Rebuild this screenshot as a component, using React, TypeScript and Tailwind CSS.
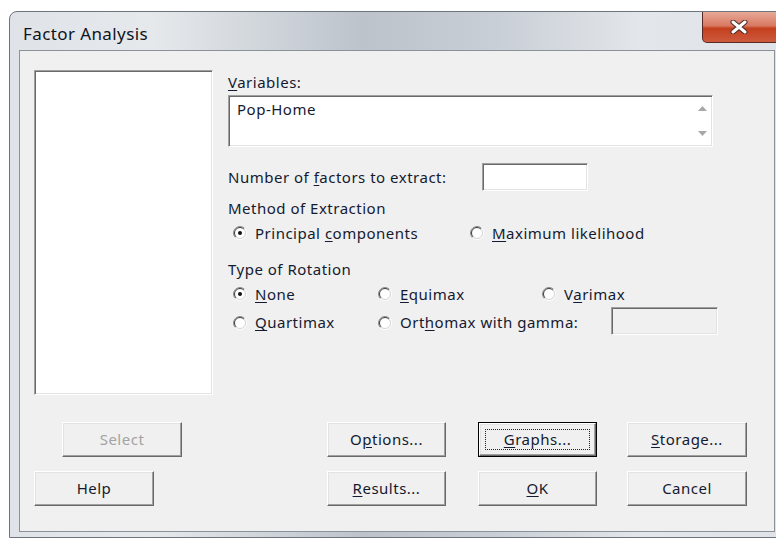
import React from 'react';

const ui = "font-['Segoe_UI','Noto_Sans',Tahoma,sans-serif]";

const sunken =
  'border border-t-[#a0a0a0] border-l-[#a0a0a0] border-r-white border-b-white shadow-[inset_1px_1px_0_#696969,inset_-1px_-1px_0_#e3e3e3]';

const raised =
  'border border-t-white border-l-white border-r-[#696969] border-b-[#696969] shadow-[inset_-1px_-1px_0_#a0a0a0,inset_1px_1px_0_#e3e3e3]';

// label with one underlined access-key letter
const Key: React.FC<{ text: string; at: number }> = ({ text, at }) => (
  <>
    {text.slice(0, at)}
    <span className="underline underline-offset-2">{text[at]}</span>
    {text.slice(at + 1)}
  </>
);

const RadioDot: React.FC<{ on?: boolean }> = ({ on }) => (
  <svg width="14" height="14" viewBox="0 0 14 14" className="shrink-0">
    <circle cx="7" cy="7" r="5.5" fill="#fff" />
    <path d="M11.6 2.4 A6.5 6.5 0 0 0 2.4 11.6" fill="none" stroke="#8a8a8a" strokeWidth="1" />
    <path d="M10.9 3.1 A5.5 5.5 0 0 0 3.1 10.9" fill="none" stroke="#3c3c3c" strokeWidth="1" />
    <path d="M2.4 11.6 A6.5 6.5 0 0 0 11.6 2.4" fill="none" stroke="#fff" strokeWidth="1" />
    <path d="M3.1 10.9 A5.5 5.5 0 0 0 10.9 3.1" fill="none" stroke="#d4d4d4" strokeWidth="1" />
    {on && <circle cx="7" cy="7" r="2" fill="#111" />}
  </svg>
);

const Radio: React.FC<{ on?: boolean; children: React.ReactNode }> = ({ on, children }) => (
  <div className="flex items-center gap-[8px] h-[18px]">
    <RadioDot on={on} />
    <span>{children}</span>
  </div>
);

const Btn: React.FC<{
  children: React.ReactNode;
  w?: string;
  disabled?: boolean;
  focus?: boolean;
}> = ({ children, w = 'w-[119px]', disabled, focus }) => (
  <div className={`${w} h-[35px] ${focus ? 'border border-black' : ''}`}>
    <div className={`${raised} h-full bg-[#f0f0f0] flex items-center justify-center ${disabled ? 'text-[#a3a3a3]' : ''}`}>
      {focus ? (
        <div className="border border-dotted border-[#222] w-[calc(100%-10px)] h-[calc(100%-10px)] flex items-center justify-center">
          {children}
        </div>
      ) : (
        children
      )}
    </div>
  </div>
);

const CloseGlyph = () => (
  <svg width="20" height="14" viewBox="0 0 20 14">
    <path d="M4 2 L16 12 M16 2 L4 12" stroke="#4a2a24" strokeWidth="5" strokeLinecap="round" />
    <path d="M4 2 L16 12 M16 2 L4 12" stroke="#fff" strokeWidth="3" strokeLinecap="round" />
  </svg>
);

export default function App() {
  return (
    <div className={`${ui} w-[776px] h-[538px] bg-white overflow-hidden text-[15px] tracking-[0.5px] text-[#141a30]`}>
      {/* window frame */}
      <div className="ml-[9px] mt-[11px] w-[790px] h-[527px] rounded-tl-[8px] border border-[#6e747c] bg-[linear-gradient(90deg,#dfe3e8_0%,#e6e9ec_18%,#bcc3cb_45%,#c9cfd6_62%,#e3e6ea_80%,#dfe3e8_100%)] relative">
        {/* title bar */}
        <div className="h-[38px] flex items-center pl-[13px] pt-[6px] text-[17px] tracking-[0.4px] text-[#0f1420]">
          Factor Analysis
        </div>
        <div className="absolute top-0 left-[692px] w-[90px] h-[31px] rounded-b-[5px] border border-t-0 border-[#5a2a22] bg-[linear-gradient(180deg,#e6a898_0%,#d97a62_45%,#c4401f_55%,#cd5a3e_100%)] flex items-center pl-[26px]">
          <CloseGlyph />
        </div>

        {/* client area */}
        <div className="ml-[9px] w-[756px] h-[482px] border border-[#8b9199] bg-[#f0f0f0] flex flex-col">
          <div className="flex mt-[19px]">
            {/* source list */}
            <div className={`${sunken} ml-[14px] w-[179px] h-[325px] bg-white`} />

            <div className="ml-[15px] flex flex-col">
              <div className="h-[18px] leading-[18px] mt-[3px]">
                <Key text="Variables:" at={0} />
              </div>
              <div className={`${sunken} mt-[4px] w-[485px] h-[52px] bg-white flex`}>
                <div className="flex-1 pl-[8px] pt-[4px] leading-[18px]">Pop-Home</div>
                <div className="w-[20px] flex flex-col items-center justify-between py-[10px]">
                  <svg width="9" height="5" viewBox="0 0 9 5">
                    <path d="M0 5 L4.5 0 L9 5 Z" fill="#a8a8a8" />
                  </svg>
                  <svg width="9" height="5" viewBox="0 0 9 5">
                    <path d="M0 0 L4.5 5 L9 0 Z" fill="#a8a8a8" />
                  </svg>
                </div>
              </div>

              <div className="flex items-center mt-[16px] h-[28px]">
                <span className="w-[254px]">
                  Number of <Key text="factors" at={0} /> to extract:
                </span>
                <div className={`${sunken} w-[106px] h-[28px] bg-white`} />
              </div>

              <div className="mt-[8px] h-[18px] leading-[18px]">Method of Extraction</div>
              <div className="mt-[7px] flex pl-[5px]">
                <div className="w-[237px]">
                  <Radio on>
                    Principal <Key text="components" at={0} />
                  </Radio>
                </div>
                <Radio>
                  <Key text="Maximum likelihood" at={0} />
                </Radio>
              </div>

              <div className="mt-[18px] h-[18px] leading-[18px]">Type of Rotation</div>
              <div className="mt-[7px] grid grid-cols-[145px_164px_1fr] pl-[5px]">
                <Radio on>
                  <Key text="None" at={0} />
                </Radio>
                <Radio>
                  <Key text="Equimax" at={0} />
                </Radio>
                <Radio>
                  <Key text="Varimax" at={1} />
                </Radio>
              </div>
              <div className="mt-[4px] flex items-center pl-[5px]">
                <div className="w-[145px] mt-[3px]">
                  <Radio>
                    <Key text="Quartimax" at={0} />
                  </Radio>
                </div>
                <div className="w-[233px] mt-[3px]">
                  <Radio>
                    <Key text="Orthomax with gamma:" at={3} />
                  </Radio>
                </div>
                <div className={`${sunken} w-[107px] h-[28px] bg-[#f0f0f0]`} />
              </div>
            </div>
          </div>

          {/* buttons */}
          <div className="flex mt-[27px] pl-[42px]">
            <Btn w="w-[120px]" disabled>
              Select
            </Btn>
            <div className="ml-[145px]">
              <Btn>
                <Key text="Options..." at={1} />
              </Btn>
            </div>
            <div className="ml-[32px]">
              <Btn focus>
                <Key text="Graphs..." at={0} />
              </Btn>
            </div>
            <div className="ml-[30px]">
              <Btn w="w-[120px]">
                <Key text="Storage..." at={0} />
              </Btn>
            </div>
          </div>
          <div className="flex mt-[14px] pl-[14px]">
            <Btn w="w-[120px]">Help</Btn>
            <div className="ml-[173px]">
              <Btn>
                <Key text="Results..." at={0} />
              </Btn>
            </div>
            <div className="ml-[32px]">
              <Btn>
                <Key text="OK" at={0} />
              </Btn>
            </div>
            <div className="ml-[30px]">
              <Btn w="w-[120px]">Cancel</Btn>
            </div>
          </div>
        </div>
      </div>
    </div>
  );
}
